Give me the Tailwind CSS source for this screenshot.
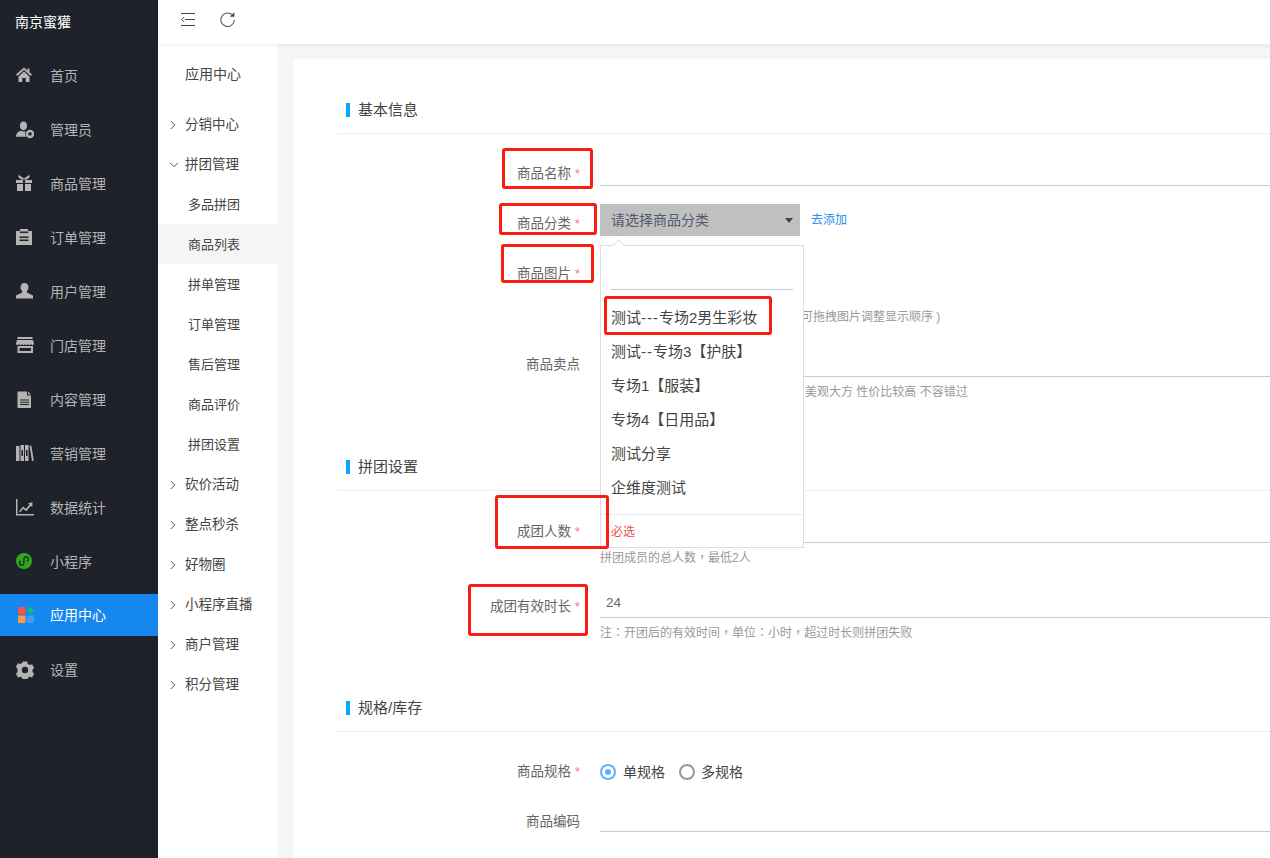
<!DOCTYPE html>
<html lang="zh-CN">
<head>
    <meta charset="UTF-8" />
    <title>商品管理</title>
    <script src="https://cdn.jsdelivr.net/npm/@tailwindcss/browser@4"></script>
</head>
<body class="m-0 overflow-hidden">
<div class="relative flex h-[858px] w-[1270px] overflow-hidden bg-[#f5f5f5] font-['Liberation_Sans','Noto_Sans_CJK_SC',sans-serif] text-[13.5px] text-[#666666]">

    <!-- main sidebar -->
    <aside class="w-[158px] shrink-0 bg-[#1f222b] text-[14px] text-[#b4b4b4]">
        <div class="h-[49px] pl-[15px] pt-[11px] leading-[22px] text-white">南京蜜獾</div>
        <nav>
            <a class="flex h-[54px] items-center">
                <svg class="ml-[16px] mr-[16px] h-[18px] w-[18px]" viewBox="0 0 18 18" fill="currentColor"><path d="M8 .5 0 7.500l1.200 1.400L8 3l6.800 5.900L16 7.500l-2.500-2.200V1.500h-2v2.100z"/><path d="M2.500 9.500 8 4.600l5.500 4.900V15H9.700v-4H6.300v4H2.500z"/></svg>
                <span>首页</span>
            </a>
            <a class="flex h-[54px] items-center">
                <svg class="ml-[16px] mr-[16px] h-[18px] w-[18px]" viewBox="0 0 18 18" fill="currentColor"><path d="M7.500 .5c2.300 0 3.600 1.800 3.600 4S9.800 9.200 7.500 9.200 3.900 6.700 3.900 4.500 5.200.5 7.500.5zM0 15.800c0-3.600 2-5.400 4.800-6 1.600 1 3.600 1 5 .2-.7 1-.8 2.800-.3 4 .2.700.6 1.300 1.100 1.800z"/><circle cx="14" cy="13" r="3" fill="none" stroke="currentColor" stroke-width="2.400"/></svg>
                <span>管理员</span>
            </a>
            <a class="flex h-[54px] items-center">
                <svg class="ml-[16px] mr-[16px] h-[18px] w-[18px]" viewBox="0 0 18 18" fill="currentColor"><path d="M3 0l5 3.500L13 0l1 1.500-3 3H5l-3-3zM0 5h7v3H0zM9 5h7v3H9zM1 9h6v7H1zM9 9h6v7H9z"/></svg>
                <span>商品管理</span>
            </a>
            <a class="flex h-[54px] items-center">
                <svg class="ml-[16px] mr-[16px] h-[18px] w-[18px]" viewBox="0 0 18 18" fill="currentColor"><path fill-rule="evenodd" d="M0 2h4V0h8v2h4v14H0zM3.500 7.500V9h9V7.500zm0 3V12h9v-1.500zM4 2.500V4h8V2.500z"/></svg>
                <span>订单管理</span>
            </a>
            <a class="flex h-[54px] items-center">
                <svg class="ml-[16px] mr-[16px] h-[18px] w-[18px]" viewBox="0 0 18 18" fill="currentColor"><path d="M8.500 0c2.500 0 4 1.900 4 4.200 0 1.500-.6 2.900-1.600 3.800v1.400L17 12.500V15.500H0v-3l6.100-3.100V8C5.100 7.100 4.500 5.700 4.500 4.200 4.500 1.900 6 0 8.500 0z"/></svg>
                <span>用户管理</span>
            </a>
            <a class="flex h-[54px] items-center">
                <svg class="ml-[16px] mr-[16px] h-[18px] w-[18px]" viewBox="0 0 18 18" fill="currentColor"><path fill-rule="evenodd" d="M1.500 0h15v2h-15zM1 3h16l1 3.500c0 1-1 1.500-1.500 1.500s-1.500-.5-1.500-1c0 .5-1 1-1.500 1S12 7.500 12 7c0 .5-1 1-1.500 1S9 7.500 9 7c0 .5-1 1-1.500 1S6 7.500 6 7c0 .5-1 1-1.500 1S3 7.500 3 7c0 .5-1 1-1.500 1S0 7.500 0 6.500zM1.500 9H17v7H1.500zm2 2v3h11.500v-3z"/></svg>
                <span>门店管理</span>
            </a>
            <a class="flex h-[54px] items-center">
                <svg class="ml-[16px] mr-[16px] h-[18px] w-[18px]" viewBox="0 0 18 18" fill="currentColor"><path fill-rule="evenodd" d="M1.500 .5h9.500v4h4V17H1.500zM4 8.500v1h9v-1zm0 2.300v1h9v-1zm0 2.300v1h9v-1zM12 .5l3 3h-3z"/></svg>
                <span>内容管理</span>
            </a>
            <a class="flex h-[54px] items-center">
                <svg class="ml-[16px] mr-[16px] h-[18px] w-[18px]" viewBox="0 0 18 18" fill="currentColor"><path fill-rule="evenodd" d="M0 1h3.500v15H0zM4.500 0h3.500v16H4.500zM5.500 5v6h1.500V5zM9 0h3.500v16H9zm1 5v6h1.500V5zM13.500 1l1.800-.5L17.800 15.500l-1.800.5z"/></svg>
                <span>营销管理</span>
            </a>
            <a class="flex h-[54px] items-center">
                <svg class="ml-[16px] mr-[16px] h-[18px] w-[18px]" viewBox="0 0 18 18" fill="currentColor"><path d="M0 0h1.500v15H19v1.500H0z"/><path d="m3 12.500 4-5 3 2.500 3.500-4.500-1.500-1.300 4.500-.9-.3 4.600-1.400-1.200-4.600 5.500-3-2.500-3.300 3.800z"/></svg>
                <span>数据统计</span>
            </a>
            <a class="flex h-[54px] items-center">
                <svg class="ml-[16px] mr-[16px] h-[18px] w-[18px]" viewBox="0 0 18 18"><circle cx="8" cy="8" r="8" fill="#2fa81c"/><path d="M4.800 7.800C4 8.200 3.600 9 3.600 10c0 1.300 1 2.200 2.100 2.200S7.900 11.300 7.900 10V6c0-1.200 1-2.200 2.100-2.200s2.200 1 2.200 2.200c0 1-.5 1.800-1.300 2.200" fill="none" stroke="#1f222b" stroke-width="1.300"/></svg>
                <span>小程序</span>
            </a>
            <a class="mt-[5px] mb-[7px] flex h-[42px] items-center bg-[#1787f0] text-white">
                <svg class="ml-[17px] mr-[15px] h-[18px] w-[18px]" viewBox="0 0 18 18"><rect x="1" y="1" width="7.500" height="7.500" rx="1.200" fill="#f5544d"/><path d="m13.400 .6 4 4-4 4-4-4z" fill="#14b58c"/><rect x="1" y="9.500" width="7.500" height="7.500" rx="1.200" fill="#fb9b3f"/><rect x="9.500" y="9.500" width="7.500" height="7.500" rx="1.200" fill="#3f9cf8"/></svg>
                <span>应用中心</span>
            </a>
            <a class="flex h-[54px] items-center">
                <svg class="ml-[16px] mr-[16px] h-[18px] w-[18px]" viewBox="0 0 18 18" fill="currentColor"><path fill-rule="evenodd" d="M6.800 .6h4.400l.7 2.300 1.900 1 2.300-.6 2 3.600-1.600 1.800v2.300l1.600 1.800-2 3.600-2.300-.6-1.900 1-.7 2.300H6.800l-.7-2.300-1.900-1-2.300.6-2-3.600 1.600-1.800V7.700L-.1 5.900l2-3.600 2.300.6 1.900-1zM9 5.800a3.200 3.200 0 1 0 0 6.400 3.200 3.200 0 0 0 0-6.400z"/></svg>
                <span>设置</span>
            </a>
        </nav>
    </aside>

    <div class="flex min-w-0 flex-1 flex-col">
        <!-- top bar -->
        <header class="z-10 flex h-[44px] shrink-0 items-center bg-white pb-[6px] pl-[23px] shadow-[0_1px_4px_rgba(0,21,41,0.08)]">
            <svg class="h-[13px] w-[14px]" viewBox="0 0 14 13" fill="none" stroke="#444444" stroke-width="1"><path d="M0 .5h14M4 6.500h10M0 12.500h14M3 4.300.6 6.500 3 8.700"/></svg>
            <svg class="ml-[25px] h-[15px] w-[15px]" viewBox="0 0 15 15" fill="none" stroke="#555555" stroke-width="1.100"><path d="M12 2.700A6.700 6.700 0 1 0 14.300 8"/><path d="M14.300 .3v4.500h-4.500z" fill="#444444" stroke="none"/></svg>
        </header>

        <div class="flex min-h-0 flex-1">
            <!-- sub menu -->
            <div class="w-[120px] shrink-0 bg-white pt-[10px] text-[13.5px] text-[#444444]">
                <div class="mb-[10px] h-[40px] pl-[27px] text-[14px] leading-[40px]">应用中心</div>
                <div class="flex h-[40px] items-center pl-[12px] pt-[2px]"><svg class="mr-[9px] h-[10px] w-[6px]" viewBox="0 0 6 10" fill="none" stroke="#515a6e"><path d="m.8 1 4 4-4 4"/></svg>分销中心</div>
                <div class="flex h-[40px] items-center pl-[11px] pt-[2px]"><svg class="mr-[6px] h-[6px] w-[10px]" viewBox="0 0 10 6" fill="none" stroke="#515a6e"><path d="m1 .8 4 4 4-4"/></svg>拼团管理</div>
                <div class="h-[40px] pl-[30px] text-[13px] leading-[41px]">多品拼团</div>
                <div class="h-[40px] bg-[#f5f5f5] pl-[30px] text-[13px] leading-[41px]">商品列表</div>
                <div class="h-[40px] pl-[30px] text-[13px] leading-[41px]">拼单管理</div>
                <div class="h-[40px] pl-[30px] text-[13px] leading-[41px]">订单管理</div>
                <div class="h-[40px] pl-[30px] text-[13px] leading-[41px]">售后管理</div>
                <div class="h-[40px] pl-[30px] text-[13px] leading-[41px]">商品评价</div>
                <div class="h-[40px] pl-[30px] text-[13px] leading-[41px]">拼团设置</div>
                <div class="flex h-[40px] items-center pl-[12px] pt-[2px]"><svg class="mr-[9px] h-[10px] w-[6px]" viewBox="0 0 6 10" fill="none" stroke="#515a6e"><path d="m.8 1 4 4-4 4"/></svg>砍价活动</div>
                <div class="flex h-[40px] items-center pl-[12px] pt-[2px]"><svg class="mr-[9px] h-[10px] w-[6px]" viewBox="0 0 6 10" fill="none" stroke="#515a6e"><path d="m.8 1 4 4-4 4"/></svg>整点秒杀</div>
                <div class="flex h-[40px] items-center pl-[12px] pt-[2px]"><svg class="mr-[9px] h-[10px] w-[6px]" viewBox="0 0 6 10" fill="none" stroke="#515a6e"><path d="m.8 1 4 4-4 4"/></svg>好物圈</div>
                <div class="flex h-[40px] items-center pl-[12px] pt-[2px]"><svg class="mr-[9px] h-[10px] w-[6px]" viewBox="0 0 6 10" fill="none" stroke="#515a6e"><path d="m.8 1 4 4-4 4"/></svg>小程序直播</div>
                <div class="flex h-[40px] items-center pl-[12px] pt-[2px]"><svg class="mr-[9px] h-[10px] w-[6px]" viewBox="0 0 6 10" fill="none" stroke="#515a6e"><path d="m.8 1 4 4-4 4"/></svg>商户管理</div>
                <div class="flex h-[40px] items-center pl-[12px] pt-[2px]"><svg class="mr-[9px] h-[10px] w-[6px]" viewBox="0 0 6 10" fill="none" stroke="#515a6e"><path d="m.8 1 4 4-4 4"/></svg>积分管理</div>
            </div>

            <!-- form card -->
            <main class="min-w-0 flex-1 pl-[15px] pt-[15px]">
                <div class="h-full bg-white pl-[45px] pt-[28px]">
                    <div class="flex h-[47px] items-center border-b border-[#eeeeee] pl-[8px] text-[15px] text-[#444444]">
                        <i class="mr-[8px] h-[14px] w-[4px] bg-[#0ba6fb]"></i>基本信息
                    </div>

                    <div class="flex h-[52px] items-end">
                        <div class="w-[242px] pb-[1px] text-right leading-[22px]">商品名称 <span class="text-[#f27a7a]">*</span></div>
                        <div class="ml-[20px] h-full flex-1 border-b border-[#c5cbd6]"></div>
                    </div>

                    <div class="mt-[18px] flex h-[32px]">
                        <div class="w-[242px] pt-[9px] text-right leading-[22px]">商品分类 <span class="text-[#f27a7a]">*</span></div>
                        <div class="relative ml-[20px] flex w-[200px] items-center justify-between bg-[#c0c0c0] pl-[11px] pr-[7px] text-[14px] text-[#515a6e]">
                            <span>请选择商品分类</span>
                            <i class="h-0 w-0 border-x-[4px] border-t-[5px] border-x-transparent border-t-[#444]"></i>
                            <!-- open dropdown -->
                            <div class="absolute left-0 top-[41px] z-10 h-[303px] w-[204px] border border-[#dcdee2] bg-white">
                                <i class="absolute left-[14px] top-[-5px] h-[8px] w-[8px] rotate-45 border-l border-t border-[#dcdee2] bg-white"></i>
                                <div class="mx-[10px] mt-[43px] border-b border-[#c5cbd6]"></div>
                                <ul class="mt-[11px]">
                                    <li class="h-[34px] pl-[10px] text-[15px] leading-[34px] text-[#444444]">测试<span class="tracking-[1px]">---</span>专场2男生彩妆</li>
                                    <li class="h-[34px] pl-[10px] text-[15px] leading-[34px] text-[#444444]">测试<span class="tracking-[1px]">--</span>专场3【护肤】</li>
                                    <li class="h-[34px] pl-[10px] text-[15px] leading-[34px] text-[#444444]">专场1【服装】</li>
                                    <li class="h-[34px] pl-[10px] text-[15px] leading-[34px] text-[#444444]">专场4【日用品】</li>
                                    <li class="h-[34px] pl-[10px] text-[15px] leading-[34px] text-[#444444]">测试分享</li>
                                    <li class="h-[34px] pl-[10px] text-[15px] leading-[34px] text-[#444444]">企维度测试</li>
                                </ul>
                                <div class="mt-[9px] border-t border-[#e8eaec] pl-[10px] pt-[7px] text-[12px] leading-[20px] text-[#e8504a]">必选</div>
                            </div>
                        </div>
                        <span class="ml-[11px] self-center text-[12px] text-[#2d8cf0]">去添加</span>
                    </div>

                    <div class="mt-[26px] flex h-[64px]">
                        <div class="w-[242px] pt-[1px] text-right leading-[22px]">商品图片 <span class="text-[#f27a7a]">*</span></div>
                        <div class="ml-[221px] self-end pt-[2px] text-[12px] leading-[20px] text-[#999999]"><span class="relative top-[1px]">可拖拽图片调整显示顺序 )</span></div>
                    </div>

                    <div class="flex h-[51px] items-end">
                        <div class="w-[242px] pb-[1px] text-right leading-[22px]">商品卖点</div>
                        <div class="ml-[20px] h-full flex-1 border-b border-[#c5cbd6]"></div>
                    </div>
                    <div class="ml-[467px] mt-[5px] text-[12px] leading-[20px] text-[#999999]">美观大方 性价比较高 不容错过</div>

                    <div class="mt-[41px] flex h-[48px] items-center border-b border-[#eeeeee] pl-[8px] pt-[1px] text-[15px] text-[#444444]">
                        <i class="mr-[8px] h-[14px] w-[4px] bg-[#0ba6fb]"></i>拼团设置
                    </div>

                    <div class="flex h-[52px] items-end">
                        <div class="w-[242px] text-right leading-[22px]">成团人数 <span class="text-[#f27a7a]">*</span></div>
                        <div class="ml-[20px] h-full flex-1 border-b border-[#c5cbd6]"></div>
                    </div>
                    <div class="ml-[262px] mt-[4px] h-[20px] text-[12px] leading-[20px] text-[#999999]">拼团成员的总人数<span lang="zh-TW" class="font-['Noto_Sans_CJK_TC']">，</span>最低2人</div>

                    <div class="flex h-[51px] items-end">
                        <div class="w-[242px] text-right leading-[22px]">成团有效时长 <span class="text-[#f27a7a]">*</span></div>
                        <div class="ml-[20px] flex h-full flex-1 items-end border-b border-[#c5cbd6] pb-[3px] pl-[6px] leading-[22px]">24</div>
                    </div>
                    <div class="ml-[262px] mt-[4px] h-[20px] text-[12px] leading-[20px] text-[#999999]">注<span lang="zh-TW" class="font-['Noto_Sans_CJK_TC']">：</span>开团后的有效时间<span lang="zh-TW" class="font-['Noto_Sans_CJK_TC']">，</span>单位<span lang="zh-TW" class="font-['Noto_Sans_CJK_TC']">：</span>小时<span lang="zh-TW" class="font-['Noto_Sans_CJK_TC']">，</span>超过时长则拼团失败</div>

                    <div class="mt-[42px] flex h-[48px] items-center border-b border-[#eeeeee] pl-[8px] pt-[1px] text-[15px] text-[#444444]">
                        <i class="mr-[8px] h-[14px] w-[4px] bg-[#0ba6fb]"></i>规格/库存
                    </div>

                    <div class="mt-[28px] flex h-[24px] items-center">
                        <div class="w-[242px] text-right">商品规格 <span class="text-[#f27a7a]">*</span></div>
                        <div class="ml-[20px] flex items-center text-[14px] text-[#444444]">
                            <span class="flex h-[16px] w-[16px] items-center justify-center rounded-full border-2 border-[#5cb3fd]"><i class="h-[6px] w-[6px] rounded-full bg-[#5cb3fd]"></i></span>
                            <span class="ml-[7px]">单规格</span>
                            <span class="ml-[14px] h-[16px] w-[16px] rounded-full border-2 border-[#999999]"></span>
                            <span class="ml-[6px]">多规格</span>
                        </div>
                    </div>

                    <div class="flex h-[48px] items-end">
                        <div class="relative top-[1px] w-[242px] text-right leading-[22px]">商品编码</div>
                        <div class="ml-[20px] h-full flex-1 border-b border-[#c5cbd6]"></div>
                    </div>
                </div>
            </main>
        </div>
    </div>

    <!-- red annotation boxes drawn over the screenshot -->
    <div class="absolute left-[502px] top-[148px] z-20 h-[41px] w-[91px] rounded-[3px] border-[3px] border-[#fb1c10]"></div>
    <div class="absolute left-[499px] top-[203px] z-20 h-[32px] w-[98px] rounded-[3px] border-[3px] border-[#fb1c10]"></div>
    <div class="absolute left-[501px] top-[244px] z-20 h-[39px] w-[93px] rounded-[3px] border-[3px] border-[#fb1c10]"></div>
    <div class="absolute left-[604px] top-[296px] z-20 h-[39px] w-[168px] rounded-[3px] border-[3px] border-[#fb1c10]"></div>
    <div class="absolute left-[495px] top-[495px] z-20 h-[54px] w-[114px] rounded-[3px] border-[3px] border-[#fb1c10]"></div>
    <div class="absolute left-[468px] top-[584px] z-20 h-[52px] w-[120px] rounded-[3px] border-[3px] border-[#fb1c10]"></div>
</div>
</body>
</html>
